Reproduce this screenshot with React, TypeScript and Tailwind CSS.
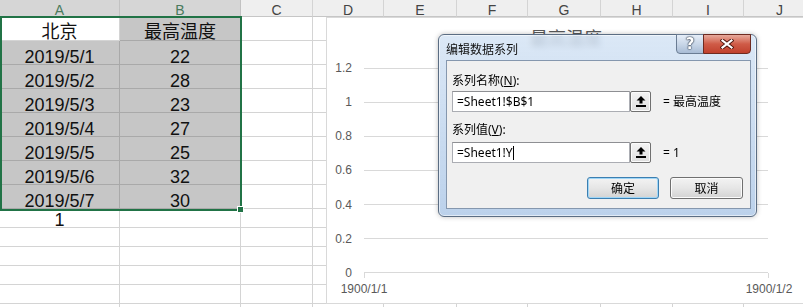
import React from "react";

type Col = { l: string; w: string };

const cols: Col[] = [
  { l: "A", w: "w-[120px]" },
  { l: "B", w: "w-[121px]" },
  { l: "C", w: "w-[72px]" },
  { l: "D", w: "w-[71px]" },
  { l: "E", w: "w-[73px]" },
  { l: "F", w: "w-[71px]" },
  { l: "G", w: "w-[73px]" },
  { l: "H", w: "w-[72px]" },
  { l: "I", w: "w-[71px]" },
  { l: "J", w: "w-[72px]" },
];

const data: string[][] = [
  ["北京", "最高温度"],
  ["2019/5/1", "22"],
  ["2019/5/2", "28"],
  ["2019/5/3", "23"],
  ["2019/5/4", "27"],
  ["2019/5/5", "25"],
  ["2019/5/6", "32"],
  ["2019/5/7", "30"],
  ["1", ""],
  ["", ""],
  ["", ""],
  ["", ""],
  ["", ""],
  ["", ""],
];

function HeaderRow() {
  return (
    <div className="flex h-[17px]">
      {cols.map((c, i) => {
        const sel = i < 2;
        return (
          <div
            key={c.l}
            className={`${c.w} shrink-0 h-full flex justify-center items-start pt-[3px] border-r border-b text-[14px] leading-none ${
              sel
                ? "bg-[#d6d6d6] text-[#4a7a5c] border-r-[#c2c2c2] border-b-[#217346]"
                : "bg-[#efefef] text-[#444444] border-r-[#d4d4d4] border-b-[#c6c6c6]"
            }`}
          >
            {c.l}
          </div>
        );
      })}
    </div>
  );
}

function DataRow({ r }: { r: number }) {
  const tall = r < 8;
  const row = data[r];
  return (
    <div className={`flex ${tall ? "h-[24px]" : "h-[19px]"}`}>
      {cols.map((c, i) => {
        const sel = r < 8 && i < 2 && !(r === 0 && i === 0);
        const txt = i < 2 ? row[i] : "";
        return (
          <div
            key={c.l}
            className={`${c.w} shrink-0 h-full flex justify-center items-end border-r border-b ${
              sel ? "bg-[#c6c6c6] border-[#a9a9a9]" : "bg-white border-[#d4d4d4]"
            }`}
          >
            {txt && (
              <span
                className={`text-[18px] leading-none text-[#111] whitespace-nowrap ${
                  r === 0 ? "-mb-[1px]" : "-mb-[2px]"
                }`}
              >
                {txt}
              </span>
            )}
          </div>
        );
      })}
    </div>
  );
}

const yLabels = ["1.2", "1", "0.8", "0.6", "0.4", "0.2", "0"];

function Chart() {
  return (
    <div className="absolute left-[326px] top-[17px] w-[480px] h-[287px] border border-[#d9d9d9] bg-white flex flex-col font-['Liberation_Sans','Noto_Sans_CJK_SC',sans-serif] text-[#595959]">
      <div className="pt-[10px] flex justify-center text-[18px] leading-none font-['Noto_Sans_CJK_SC',sans-serif]">
        最高温度
      </div>
      <div className="mt-[22px] h-[205px] flex flex-col justify-between">
        {yLabels.map((l) => (
          <div key={l} className="h-0 flex items-center">
            <div className="w-[25px] text-right text-[12px] leading-none">{l}</div>
            <div className="ml-[12px] w-[404px] h-px bg-[#d9d9d9]" />
          </div>
        ))}
      </div>
      <div className="ml-[37px] w-[405px] h-[5px] flex justify-between">
        <div className="w-px h-full bg-[#d9d9d9]" />
        <div className="w-px h-full bg-[#d9d9d9]" />
      </div>
      <div className="ml-[37px] mt-[4px] w-[405px] flex justify-between text-[12px] leading-[14px]">
        <div className="w-0 flex justify-center whitespace-nowrap">1900/1/1</div>
        <div className="w-0 flex justify-center whitespace-nowrap">1900/1/2</div>
      </div>
    </div>
  );
}

function UploadButton() {
  return (
    <div className="w-[21px] h-[21px] shrink-0 border border-[#707070] rounded-[2px] bg-gradient-to-b from-[#f4f4f4] to-[#dedede] shadow-[inset_0_0_0_1px_#fbfbfb] flex items-center justify-center">
      <svg width="10" height="11" viewBox="0 0 10 11">
        <path d="M5 0 L9.5 4.5 L6.5 4.5 L6.5 7.5 L3.5 7.5 L3.5 4.5 L0.5 4.5 Z" fill="#000" />
        <rect x="0" y="9" width="10" height="2" fill="#000" />
      </svg>
    </div>
  );
}

function Dialog() {
  return (
    <div className="absolute left-[438px] top-[34px] w-[319px] rounded-[6px] border border-[#5b6d83] bg-gradient-to-b from-[#d2e2f4]/80 to-[#b8cfea]/95 backdrop-blur-[3px] shadow-[inset_0_0_0_1px_rgba(255,255,255,0.55),0_0_5px_rgba(0,0,0,0.25)] pb-[7px] font-['Noto_Sans','Noto_Sans_CJK_SC',sans-serif] text-black">
      <div className="h-[25px] flex justify-between">
        <div className="pl-[7px] pt-[3px] flex items-center text-[12px] leading-none font-['Noto_Sans_CJK_SC',sans-serif] text-[#111]">
          编辑数据系列
        </div>
        <div className="flex self-start -mt-px mr-[5px]">
          <div className="w-[28px] h-[20px] border border-[#6a7c93] rounded-bl-[4px] bg-gradient-to-b from-[#e6eef8] via-[#c9d7e8] to-[#a9bcd5] flex items-center justify-center text-[15px] font-bold leading-none text-white font-['DejaVu_Sans',sans-serif] [text-shadow:0_0_1px_#2c3a4c,0_0_1px_#2c3a4c,0_0_2px_#2c3a4c]">
            ?
          </div>
          <div className="w-[48px] h-[20px] -ml-px border border-[#6e2a20] rounded-br-[4px] bg-gradient-to-b from-[#e6a99c] via-[#cf5b47] to-[#c0402d] flex items-center justify-center">
            <svg width="14" height="10" viewBox="0 0 14 10">
              <path d="M2.5 1.5 L11.5 8.5 M11.5 1.5 L2.5 8.5" stroke="#4a130c" strokeWidth="4" strokeLinecap="square" />
              <path d="M2.5 1.5 L11.5 8.5 M11.5 1.5 L2.5 8.5" stroke="#ffffff" strokeWidth="2.2" strokeLinecap="square" />
            </svg>
          </div>
        </div>
      </div>
      <div className="ml-[7px] mr-[5px] h-[149px] border border-[#8597ae] bg-[#f0f0f0] pl-[5px] pt-[12px] flex flex-col text-[12px]">
        <div className="h-[16px] leading-[16px]">
          系列名称(<span className="underline">N</span>):
        </div>
        <div className="mt-[2px] flex items-center">
          <div className="w-[178px] h-[21px] border border-[#abadb3] border-t-[#8e8f93] bg-white pl-[4px] leading-[19px] text-[12px]">
            =Sheet1!$B$1
          </div>
          <UploadButton />
          <div className="ml-[12px] text-[12px] leading-none">= 最高温度</div>
        </div>
        <div className="mt-[10px] h-[16px] leading-[16px]">
          系列值(<span className="underline">V</span>):
        </div>
        <div className="mt-[4px] flex items-center">
          <div className="w-[178px] h-[21px] border border-[#abadb3] border-t-[#8e8f93] bg-white pl-[4px] flex items-center text-[12px] leading-none">
            =Sheet1!Y<span className="inline-block w-px h-[14px] bg-black" />
          </div>
          <UploadButton />
          <div className="ml-[12px] text-[12px] leading-none">= 1</div>
        </div>
        <div className="mt-[14px] pr-[7px] flex justify-end gap-[11px]">
          <div className="w-[72px] h-[22px] rounded-[3px] border border-[#3c7fb1] shadow-[inset_0_0_0_1px_#9fd6f7] bg-gradient-to-b from-[#f3f3f3] via-[#e6e6e6] to-[#d3d3d3] flex items-center justify-center leading-none font-['Noto_Sans_CJK_SC',sans-serif]">
            确定
          </div>
          <div className="w-[73px] h-[22px] rounded-[3px] border border-[#707070] shadow-[inset_0_0_0_1px_#fbfbfb] bg-gradient-to-b from-[#f3f3f3] via-[#e6e6e6] to-[#d3d3d3] flex items-center justify-center leading-none font-['Noto_Sans_CJK_SC',sans-serif]">
            取消
          </div>
        </div>
      </div>
    </div>
  );
}

export default function App() {
  return (
    <div className="relative w-[803px] h-[307px] overflow-hidden bg-white font-['Liberation_Sans','Noto_Sans_CJK_SC',sans-serif]">
      <HeaderRow />
      {data.map((_, r) => (
        <DataRow key={r} r={r} />
      ))}
      <div className="absolute left-0 top-[16px] w-[242px] h-[195px] border-2 border-[#217346] pointer-events-none" />
      <div className="absolute left-[237px] top-[206px] w-[7px] h-[7px] bg-[#217346] border border-white" />
      <Chart />
      <Dialog />
    </div>
  );
}
